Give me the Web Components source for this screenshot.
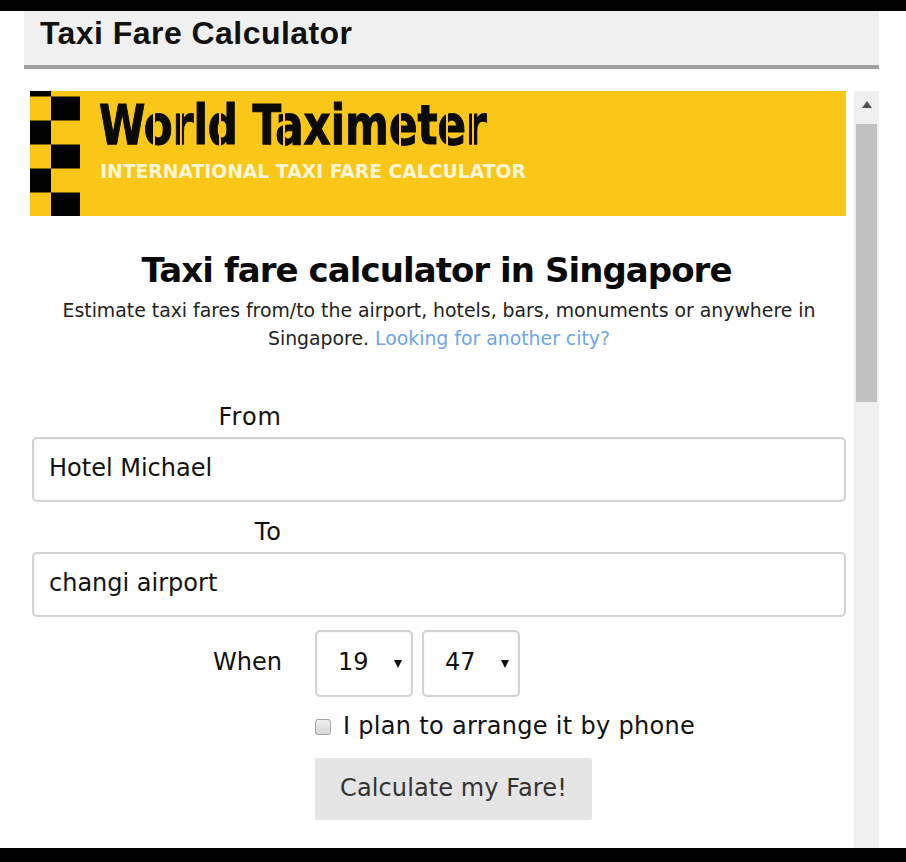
<!DOCTYPE html>
<html>
<head>
<meta charset="utf-8">
<title>Taxi Fare Calculator</title>
<style>
  html, body { margin: 0; height: 100%; background: #fff; overflow: hidden; }
  body { font-family: "DejaVu Sans", sans-serif; color: #111; }
</style>
</head>
<body>
<wt-app></wt-app>

<script>
// small helper so each component only has to give its css and markup
function shadow(el, css, html) {
  el.attachShadow({ mode: 'open' }).innerHTML = `<style>${css}</style>${html}`;
}

class WtTitleBar extends HTMLElement {
  connectedCallback() {
    shadow(this, `
      :host { display: block; height: 54px; margin: 0 27px 0 24px; padding-left: 16px; background: #f0f0f0; border-bottom: 4px solid #a1a1a1; }
      h1 { margin: 0; font: bold 32px/44px "Liberation Sans", sans-serif; letter-spacing: .45px; color: #111; }
    `, `<h1><slot></slot></h1>`);
  }
}

// x positions of the stencil breaks in the logo, from the left of the logo box
const STENCIL_SLITS = [55, 82, 121, 185, 301, 348, 374];

class WtBanner extends HTMLElement {
  connectedCallback() {
    const stops = STENCIL_SLITS.map(x => `#000 ${x - 0.8}px, transparent ${x - 0.8}px, transparent ${x + 0.8}px, #000 ${x + 0.8}px`).join(', ');
    shadow(this, `
      :host { display: flex; height: 125px; background: #fac718; }
      svg { width: 50px; height: 125px; flex: none; }
      .txt { margin-left: 19px; }
      .logo { width: 400px; height: 55px; margin-top: 7px; -webkit-mask-image: linear-gradient(90deg, ${stops}); mask-image: linear-gradient(90deg, ${stops}); }
      .name { font: bold 55px/55px "DejaVu Sans Condensed", "DejaVu Sans", sans-serif; color: #0a0a0a; -webkit-text-stroke: 1px #0a0a0a; white-space: nowrap; transform: scaleX(.85); transform-origin: 0 0; }
      .sub { margin: 7px 0 0 1px; font: bold 18.75px/24px "DejaVu Sans", sans-serif; color: #fff6d8; white-space: nowrap; }
    `, `
      <svg viewBox="0 0 50 125">
        <rect x="0" y="0" width="21" height="5.5"/>
        <rect x="21" y="5.5" width="29" height="24"/>
        <rect x="0" y="29.5" width="21" height="24"/>
        <rect x="21" y="53.5" width="29" height="24"/>
        <rect x="0" y="77.5" width="21" height="24"/>
        <rect x="21" y="101.5" width="29" height="23.5"/>
      </svg>
      <div class="txt">
        <div class="logo"><div class="name">World Taximeter</div></div>
        <div class="sub">INTERNATIONAL TAXI FARE CALCULATOR</div>
      </div>`);
  }
}

class WtScrollbar extends HTMLElement {
  connectedCallback() {
    shadow(this, `
      :host { display: block; width: 25px; background: #f0f0f0; flex: none; padding: 0 0 0 1px; box-sizing: border-box; }
      .up { height: 33px; display: flex; justify-content: center; padding-top: 10px; box-sizing: border-box; }
      .up i { width: 0; height: 0; border: 5.5px solid transparent; border-top: 0; border-bottom: 7px solid #505050; }
      .thumb { height: 278px; width: 21px; background: #c1c1c1; margin-left: 1px; }
    `, `<div class="up"><i></i></div><div class="thumb"></div>`);
  }
}

class WtField extends HTMLElement {
  connectedCallback() {
    shadow(this, `
      :host { display: block; }
      label { display: block; width: 250px; text-align: right; font-size: 24px; letter-spacing: 1px; line-height: 30px; margin-bottom: 5px; color: #111; }
      .box { height: 65px; box-sizing: border-box; padding-left: 15px; border: 2px solid #d2d2d2; border-radius: 5px; box-shadow: inset 0 0 2px rgba(0,0,0,.08); font-size: 24px; line-height: 59px; color: #111; background: #fff; }
    `, `<label>${this.getAttribute('label')}</label><div class="box"><slot></slot></div>`);
  }
}

class WtSelect extends HTMLElement {
  connectedCallback() {
    shadow(this, `
      :host { display: flex; width: 98px; height: 67px; box-sizing: border-box; padding: 0 9px 4px 21px; align-items: center; justify-content: space-between; border: 2px solid #d2d2d2; border-radius: 5px; box-shadow: inset 0 0 2px rgba(0,0,0,.08); font-size: 24px; color: #111; background: #fff; }
      i { width: 0; height: 0; border: 4px solid transparent; border-bottom: 0; border-top: 8px solid #111; margin-top: 4px; }
    `, `<slot></slot><i></i>`);
  }
}

class WtCheckbox extends HTMLElement {
  connectedCallback() {
    shadow(this, `
      :host { display: flex; align-items: center; font-size: 24px; letter-spacing: .3px; line-height: 30px; color: #111; }
      i { width: 16px; height: 16px; box-sizing: border-box; margin: 2px 12px 0 0; border: 1px solid #a0a0a0; border-radius: 3px; background: linear-gradient(#efefef, #d8d8d8); }
    `, `<i></i><slot></slot>`);
  }
}

class WtButton extends HTMLElement {
  connectedCallback() {
    shadow(this, `
      :host { display: block; width: 277px; height: 62px; box-sizing: border-box; text-align: center; background: #e5e5e5; border-radius: 2px; font-size: 24px; letter-spacing: .1px; line-height: 60px; color: #333; }
    `, `<slot></slot>`);
  }
}

class WtApp extends HTMLElement {
  connectedCallback() {
    shadow(this, `
      :host { display: flex; flex-direction: column; height: 862px; overflow: hidden; }
      .edge { background: #000; flex: none; }
      .mid { flex: 1; min-height: 0; overflow: hidden; }
      .frame { display: flex; height: 757px; margin: 22px 27px 0 30px; gap: 8px; }
      .main { flex: 1; min-width: 0; }
      .form { margin-left: 2px; }
      h2 { margin: 30px 0 0; text-align: center; font-size: 34px; letter-spacing: -.95px; line-height: 48px; color: #0a0a0a; padding-right: 5px; }
      p { margin: 3px 0 0; text-align: center; font-size: 18.85px; line-height: 28px; color: #222; }
      a { color: #6ea6e8; text-decoration: none; }
      .from { margin-top: 49px; }
      .to { margin-top: 15px; }
      .when { display: flex; align-items: center; margin-top: 13px; }
      .when .lbl { width: 250px; padding-bottom: 4px; text-align: right; font-size: 24px; margin-right: 33px; color: #111; }
      .when wt-select + wt-select { margin-left: 9px; }
      .opts { margin: 14px 0 0 283px; }
      wt-button { margin-top: 17px; }
    `, `
      <div class="edge" style="height:11px"></div>
      <div class="mid">
        <wt-title-bar>Taxi Fare Calculator</wt-title-bar>
        <div class="frame">
          <div class="main">
            <wt-banner></wt-banner>
            <div class="form">
              <h2>Taxi fare calculator in Singapore</h2>
              <p>Estimate taxi fares from/to the airport, hotels, bars, monuments or anywhere in<br>Singapore. <a href="#">Looking for another city?</a></p>
              <wt-field class="from" label="From">Hotel Michael</wt-field>
              <wt-field class="to" label="To">changi airport</wt-field>
              <div class="when">
                <span class="lbl">When</span>
                <wt-select>19</wt-select>
                <wt-select>47</wt-select>
              </div>
              <div class="opts">
                <wt-checkbox>I plan to arrange it by phone</wt-checkbox>
                <wt-button>Calculate my Fare!</wt-button>
              </div>
            </div>
          </div>
          <wt-scrollbar></wt-scrollbar>
        </div>
      </div>
      <div class="edge" style="height:14px"></div>`);
  }
}

customElements.define('wt-title-bar', WtTitleBar);
customElements.define('wt-banner', WtBanner);
customElements.define('wt-scrollbar', WtScrollbar);
customElements.define('wt-field', WtField);
customElements.define('wt-select', WtSelect);
customElements.define('wt-checkbox', WtCheckbox);
customElements.define('wt-button', WtButton);
customElements.define('wt-app', WtApp);
</script>
</body>
</html>
